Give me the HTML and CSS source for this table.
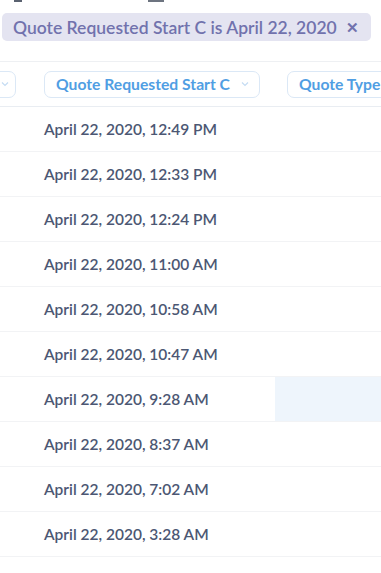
FILE: index.html
```html
<!DOCTYPE html>
<html>
<head>
<meta charset="utf-8">
<link rel="stylesheet" href="styles.css">
</head>
<body>
<div class="topfrag">
  <span class="frag frag-a"></span>
  <span class="frag frag-b"></span>
</div>
<div class="filters">
  <div class="pill">
    <span class="pill-text">Quote Requested Start C is April 22, 2020</span>
    <span class="pill-x">✕</span>
  </div>
</div>
<div class="table">
  <div class="row head">
    <div class="cell c1"><span class="hbtn hbtn-cut"><svg class="chev" width="8" height="6" viewBox="0 0 8 6"><path d="M1 1.5 L4 4.5 L7 1.5" fill="none" stroke="#c5dcf3" stroke-width="1.2"/></svg></span></div>
    <div class="cell c2"><span class="hbtn">Quote Requested Start C<svg class="chev" width="8" height="6" viewBox="0 0 8 6"><path d="M1 1.5 L4 4.5 L7 1.5" fill="none" stroke="#c5dcf3" stroke-width="1.2"/></svg></span></div>
    <div class="cell c3"><span class="hbtn">Quote Type</span></div>
  </div>
  <div class="row"><div class="cell c1"></div><div class="cell c2">April 22, 2020, 12:49 PM</div><div class="cell c3"></div></div>
  <div class="row"><div class="cell c1"></div><div class="cell c2">April 22, 2020, 12:33 PM</div><div class="cell c3"></div></div>
  <div class="row"><div class="cell c1"></div><div class="cell c2">April 22, 2020, 12:24 PM</div><div class="cell c3"></div></div>
  <div class="row"><div class="cell c1"></div><div class="cell c2">April 22, 2020, 11:00 AM</div><div class="cell c3"></div></div>
  <div class="row"><div class="cell c1"></div><div class="cell c2">April 22, 2020, 10:58 AM</div><div class="cell c3"></div></div>
  <div class="row"><div class="cell c1"></div><div class="cell c2">April 22, 2020, 10:47 AM</div><div class="cell c3"></div></div>
  <div class="row"><div class="cell c1"></div><div class="cell c2">April 22, 2020, 9:28 AM</div><div class="cell c3 hl"></div></div>
  <div class="row"><div class="cell c1"></div><div class="cell c2">April 22, 2020, 8:37 AM</div><div class="cell c3"></div></div>
  <div class="row"><div class="cell c1"></div><div class="cell c2">April 22, 2020, 7:02 AM</div><div class="cell c3"></div></div>
  <div class="row"><div class="cell c1"></div><div class="cell c2">April 22, 2020, 3:28 AM</div><div class="cell c3"></div></div>
</div>
</body>
</html>
```
FILE: styles.css
```css
html, body {
  margin: 0;
  padding: 0;
  background: #ffffff;
  font-family: Lato, "Noto Sans", sans-serif;
  overflow: hidden;
}
body {
  width: 381px;
  height: 573px;
}
.topfrag {
  height: 13px;
  position: relative;
}
.frag {
  position: absolute;
  top: 0;
  height: 2px;
  background: #5a6270;
}
.frag-a { left: 14px; width: 8px; }
.frag-b { left: 148px; width: 16px; background: #6d7480; }
.filters {
  padding-left: 2px;
  height: 48px;
}
.pill {
  width: 369px;
  height: 28px;
  box-sizing: border-box;
  background: #e4e4f1;
  border-radius: 5px;
  display: flex;
  align-items: center;
  padding-left: 11px;
  color: #7172ad;
  font-weight: 600;
  font-size: 17.5px;
}
.pill-text {
  white-space: nowrap;
}
.pill-x {
  margin-left: 9px;
  font-size: 15px;
  font-weight: 700;
}
.table {
  border-top: 1px solid #eef0f3;
}
.row {
  display: flex;
  height: 45px;
  border-bottom: 1px solid #f2f3f5;
  box-sizing: border-box;
}
.row.head {
  height: 45px;
  border-bottom: 1px solid #e9edf2;
}
.cell {
  display: flex;
  align-items: center;
  box-sizing: border-box;
  white-space: nowrap;
  overflow: hidden;
  color: #4c5773;
  font-weight: 600;
  font-size: 15.5px;
}
.c1 {
  width: 31px;
  justify-content: flex-end;
  padding-right: 15px;
  overflow: visible;
}
.c2 {
  width: 244px;
  padding-left: 13px;
}
.c3 {
  flex: 1;
  padding-left: 12px;
  overflow: hidden;
}
.hl {
  background: #eef5fc;
}
.hbtn {
  display: inline-flex;
  align-items: center;
  height: 27px;
  box-sizing: border-box;
  border: 1px solid #dbe8f6;
  border-radius: 7px;
  padding: 0 10px 0 11px;
  color: #509ee3;
  font-size: 15.7px;
  font-weight: 700;
  white-space: nowrap;
}
.hbtn-cut {
  margin-left: -40px;
  padding: 0 6px 0 30px;
}
.chev {
  margin-left: 11px;
}
.hbtn-cut .chev {
  margin-left: 0;
}
```
